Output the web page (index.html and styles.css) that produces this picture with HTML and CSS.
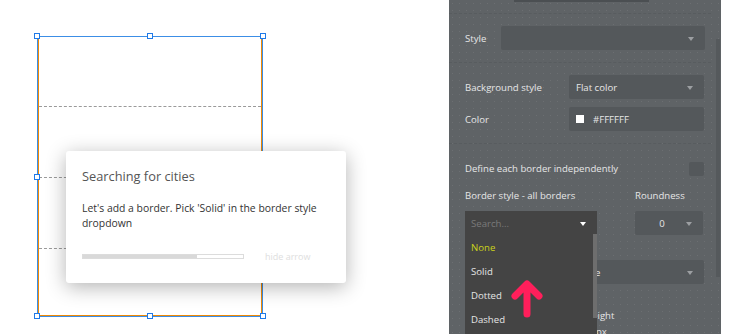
FILE: index.html
```html
<!DOCTYPE html>
<html lang="en">
<head>
  <meta charset="UTF-8">
  <meta name="viewport" content="width=device-width, initial-scale=1.0">
  <title>Border style tutorial</title>
  <link rel="stylesheet" href="styles.css">
</head>
<body>
  <div class="page">
    <div class="canvas">
      <div class="selection">
        <div class="element">
          <div class="dash-line"></div>
          <div class="dash-line"></div>
          <div class="dash-line"></div>
        </div>
        <span class="handle h-tl"></span>
        <span class="handle h-tc"></span>
        <span class="handle h-tr"></span>
        <span class="handle h-ml"></span>
        <span class="handle h-bl"></span>
        <span class="handle h-bc"></span>
        <span class="handle h-br"></span>
      </div>

      <div class="tip-card">
        <h3>Searching for cities</h3>
        <p>Let's add a border. Pick 'Solid' in the border style dropdown</p>
        <div class="tip-footer">
          <div class="progress"><div class="progress-fill"></div></div>
          <span class="hide-arrow">hide arrow</span>
        </div>
      </div>
    </div>

    <div class="panel">
      <div class="top-field"></div>
      <div class="sep sep-first"></div>

      <div class="row row-style">
        <label class="lbl lbl-style">Style</label>
        <div class="field field-wide"><span class="caret"></span></div>
      </div>
      <div class="sep sep-second"></div>

      <div class="row row-bg">
        <label class="lbl lbl-long">Background style</label>
        <div class="field field-mid"><span class="val">Flat color</span><span class="caret"></span></div>
      </div>
      <div class="row row-color">
        <label class="lbl lbl-long">Color</label>
        <div class="field field-mid"><span class="swatch"></span><span class="val">#FFFFFF</span></div>
      </div>
      <div class="sep sep-third"></div>

      <div class="row row-define">
        <label class="lbl">Define each border independently</label>
        <span class="checkbox"></span>
      </div>

      <div class="row row-labels">
        <label class="lbl lbl-border">Border style - all borders</label>
        <label class="lbl">Roundness</label>
      </div>

      <div class="row row-fields">
        <div class="dropdown">
          <div class="search-field">
            <span class="placeholder">Search...</span>
            <span class="caret caret-white"></span>
          </div>
          <div class="dropdown-list">
            <div class="item item-active">None</div>
            <div class="item">Solid</div>
            <div class="item">Dotted</div>
            <div class="item">Dashed</div>
            <div class="list-scroll"></div>
          </div>
        </div>
        <div class="field field-small"><span class="num">0</span><span class="caret"></span></div>
      </div>

      <div class="row row-hidden">
        <span class="lbl-long"></span>
        <div class="field field-mid"><span class="val">None</span><span class="caret"></span></div>
      </div>

      <div class="row row-size">
        <span class="lbl-size"></span>
        <label class="lbl">Height</label>
      </div>
      <div class="row row-size-val">
        <span class="lbl-size"></span>
        <span class="lbl">10px</span>
      </div>

      <div class="panel-scroll"></div>

      <svg class="pointer" width="34" height="40" viewBox="0 0 34 40">
        <path d="M17 35 L17 6 M5 17 L17 5 L29 17" fill="none" stroke="#ff1f5b" stroke-width="7" stroke-linecap="round" stroke-linejoin="round"/>
      </svg>
    </div>
  </div>
</body>
</html>
```

FILE: styles.css
```css
/* General */
body {
  margin: 0;
  font-family: "Open Sans", "Liberation Sans", sans-serif;
  background-color: #fff;
}

.page {
  display: flex;
  height: 334px;
  overflow: hidden;
}

/* Canvas with the selected element */
.canvas {
  position: relative;
  width: 449px;
  flex-shrink: 0;
}

.selection {
  position: absolute;
  left: 37px;
  top: 36px;
  width: 224px;
  height: 279px;
  border: 1px solid #3c8ee6;
}

.element {
  height: 100%;
  box-sizing: border-box;
  border-left: 1px solid #ef8a06;
  border-right: 1px solid #ef8a06;
  border-bottom: 1px solid #ef8a06;
  padding-top: 69px;
}

.dash-line {
  height: 0;
  border-top: 1px dashed #9a9a9a;
  margin-bottom: 70px;
}

.handle {
  position: absolute;
  width: 4px;
  height: 4px;
  background: #fff;
  border: 1px solid #1f7ae8;
}

.h-tl { left: -4px; top: -4px; }
.h-tc { left: 109px; top: -4px; }
.h-tr { left: 222px; top: -4px; }
.h-ml { left: -4px; top: 137px; }
.h-bl { left: -4px; top: 276px; }
.h-bc { left: 109px; top: 276px; }
.h-br { left: 222px; top: 276px; }

/* Tutorial card */
.tip-card {
  position: absolute;
  left: 66px;
  top: 151px;
  width: 280px;
  height: 132px;
  box-sizing: border-box;
  padding: 16px 16px 0 16px;
  background: #fff;
  border-radius: 3px;
  box-shadow: 0 4px 20px rgba(0, 0, 0, 0.3);
}

.tip-card h3 {
  margin: 0;
  font-size: 12.8px;
  line-height: 18px;
  font-weight: normal;
  color: #555;
}

.tip-card p {
  margin: 16px 0 0 0;
  font-size: 10.4px;
  line-height: 15px;
  color: #333;
}

.tip-footer {
  display: flex;
  align-items: center;
  margin-top: 19px;
}

.progress {
  width: 160px;
  height: 3px;
  border: 1px solid #dcdcdc;
}

.progress-fill {
  width: 114px;
  height: 100%;
  background: #d9d9d9;
}

.hide-arrow {
  margin-left: 21px;
  font-size: 9px;
  color: #dedede;
}

/* Property panel */
.panel {
  position: relative;
  width: 272px;
  flex-shrink: 0;
  box-sizing: border-box;
  padding: 0 16px;
  background-color: #5f6366;
  background-image: radial-gradient(circle, rgba(255, 255, 255, 0.08) 0.7px, transparent 1px);
  background-size: 7px 7px;
  color: #e6e6e6;
  font-size: 9.6px;
}

.top-field {
  width: 135px;
  height: 2px;
  margin-left: 49px;
  background: #4b4f52;
}

.sep {
  height: 0;
  margin-left: -16px;
  margin-right: -6px;
  border-top: 1px dashed #585c5f;
}

.sep-first { margin-top: 11px; }
.sep-second { margin-top: 12px; }
.sep-third { margin-top: 12px; }

.row {
  display: flex;
  align-items: center;
}

.lbl {
  white-space: nowrap;
}

.lbl-style { width: 36px; }
.lbl-long { width: 104px; flex-shrink: 0; }
.lbl-border { width: 170px; flex-shrink: 0; }
.lbl-size { width: 120px; flex-shrink: 0; }

.field {
  position: relative;
  height: 24px;
  display: flex;
  align-items: center;
  background: #54585b;
  border-radius: 2px;
}

.field-wide { width: 204px; }
.field-mid { width: 135px; }
.field-small { width: 68px; margin-right: 2px; }

.val { margin-left: 7px; }

.swatch {
  width: 8px;
  height: 8px;
  margin-left: 7px;
  background: #fff;
}

.swatch + .val { margin-left: 9px; }

.num {
  width: 54px;
  text-align: center;
}

.caret {
  position: absolute;
  right: 11px;
  top: 11px;
  width: 0;
  height: 0;
  border-left: 3.5px solid transparent;
  border-right: 3.5px solid transparent;
  border-top: 4px solid #9c9fa2;
}

.caret-white {
  border-top-color: #fff;
  right: 11px;
}

.row-style { margin-top: 12px; }
.row-bg { margin-top: 12px; }
.row-color { margin-top: 8px; }
.row-define { margin-top: 17px; justify-content: space-between; height: 15px; }
.row-labels { margin-top: 12px; height: 14px; }
.row-fields { margin-top: 9px; justify-content: space-between; align-items: flex-start; }
.row-hidden { margin-top: 25px; }
.row-size { margin-top: 24px; height: 14px; }
.row-size-val { margin-top: 2px; height: 14px; }

.checkbox {
  width: 15px;
  height: 14px;
  margin-right: 1px;
  background: #54585b;
  border-radius: 2px;
}

/* Open dropdown */
.dropdown {
  position: relative;
  width: 132px;
  z-index: 5;
}

.search-field {
  position: relative;
  height: 24px;
  display: flex;
  align-items: center;
  background: #444;
}

.placeholder {
  margin-left: 6px;
  color: #7a7a7a;
}

.dropdown-list {
  position: absolute;
  left: 0;
  top: 24px;
  width: 132px;
  height: 110px;
  background: #444;
}

.item {
  height: 24px;
  line-height: 24px;
  padding-left: 6px;
  color: #e4e4e4;
}

.item:first-child { margin-top: 1px; }

.item-active { color: #ccd31a; }

.list-scroll {
  position: absolute;
  right: 0;
  top: -1px;
  width: 4px;
  height: 84px;
  background: #6e6e6e;
}

.panel-scroll {
  position: absolute;
  right: 1px;
  top: 39px;
  width: 4px;
  height: 238px;
  background: #55595c;
}

.pointer {
  position: absolute;
  left: 61px;
  top: 279px;
  z-index: 6;
}
```
